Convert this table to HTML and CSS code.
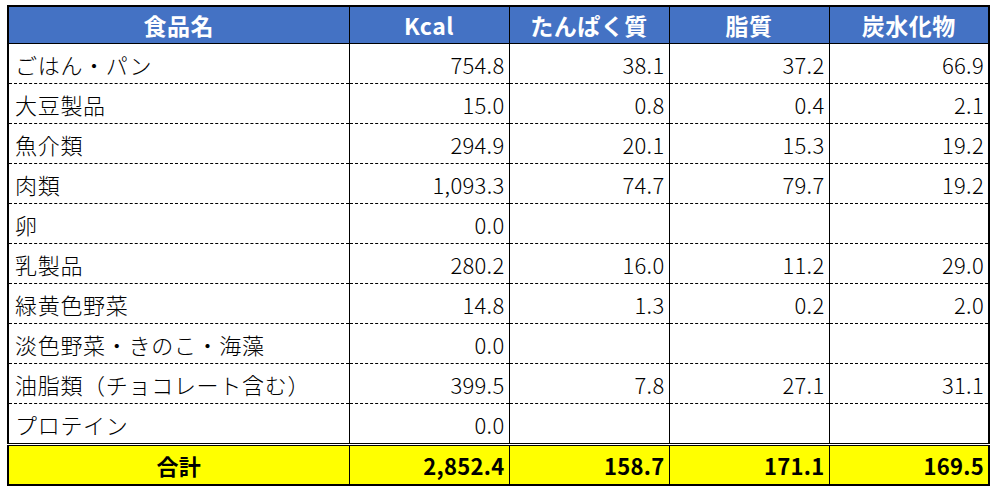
FILE: index.html
```html
<!DOCTYPE html>
<html lang="ja">
<head>
<meta charset="utf-8">
<link rel="stylesheet" href="styles.css">
</head>
<body>
<table class="nutri">
  <colgroup>
    <col class="c-name"><col class="c-num"><col class="c-num"><col class="c-num"><col class="c-num">
  </colgroup>
  <thead>
    <tr><th>食品名</th><th>Kcal</th><th>たんぱく質</th><th>脂質</th><th>炭水化物</th></tr>
  </thead>
  <tbody>
    <tr><td class="name">ごはん・パン</td><td>754.8</td><td>38.1</td><td>37.2</td><td>66.9</td></tr>
    <tr><td class="name">大豆製品</td><td>15.0</td><td>0.8</td><td>0.4</td><td>2.1</td></tr>
    <tr><td class="name">魚介類</td><td>294.9</td><td>20.1</td><td>15.3</td><td>19.2</td></tr>
    <tr><td class="name">肉類</td><td>1,093.3</td><td>74.7</td><td>79.7</td><td>19.2</td></tr>
    <tr><td class="name">卵</td><td>0.0</td><td></td><td></td><td></td></tr>
    <tr><td class="name">乳製品</td><td>280.2</td><td>16.0</td><td>11.2</td><td>29.0</td></tr>
    <tr><td class="name">緑黄色野菜</td><td>14.8</td><td>1.3</td><td>0.2</td><td>2.0</td></tr>
    <tr><td class="name">淡色野菜・きのこ・海藻</td><td>0.0</td><td></td><td></td><td></td></tr>
    <tr><td class="name">油脂類（チョコレート含む）</td><td>399.5</td><td>7.8</td><td>27.1</td><td>31.1</td></tr>
    <tr><td class="name">プロテイン</td><td>0.0</td><td></td><td></td><td></td></tr>
  </tbody>
  <tfoot>
    <tr><td class="total-label">合計</td><td>2,852.4</td><td>158.7</td><td>171.1</td><td>169.5</td></tr>
  </tfoot>
</table>
</body>
</html>
```
FILE: styles.css
```css
html, body {
  margin: 0;
  background: #ffffff;
}
body {
  padding: 5px 0 0 7px;
  font-family: "Noto Sans CJK JP", "Noto Sans", sans-serif;
  color: #000;
}
.nutri {
  border-collapse: collapse;
  table-layout: fixed;
  width: 982px;
  border: 2px solid #000;
}
.c-name { width: 341px; }
.c-num { width: 160px; }
.nutri th {
  background: #4472c4;
  color: #ffffff;
  font-weight: 700;
  font-size: 23px;
  height: 36px;
  padding: 0;
  text-align: center;
  border: 1px solid #000;
  line-height: 1;
  letter-spacing: 0.5px;
}
.nutri td {
  height: 39px;
  padding: 0 4px 0 0;
  font-size: 22px;
  font-weight: 300;
  letter-spacing: 0.3px;
  text-align: right;
  border-left: 1px solid #000;
  border-right: 1px solid #000;
  border-bottom: 1px dashed #000;
  line-height: 1;
  vertical-align: middle;
}
.nutri tbody tr:last-child td {
  border-bottom: 1px solid #000;
}
.nutri td.name {
  text-align: left;
  padding: 0 0 0 6px;
  font-size: 22px;
  letter-spacing: 0.7px;
}
.nutri tfoot td {
  background: #ffff00;
  font-weight: 700;
  font-size: 22px;
  border-top: 3px double #000;
  border-bottom: 2px solid #000;
  height: 38px;
}
.nutri tfoot td.total-label {
  text-align: center;
  padding: 0;
}
```
